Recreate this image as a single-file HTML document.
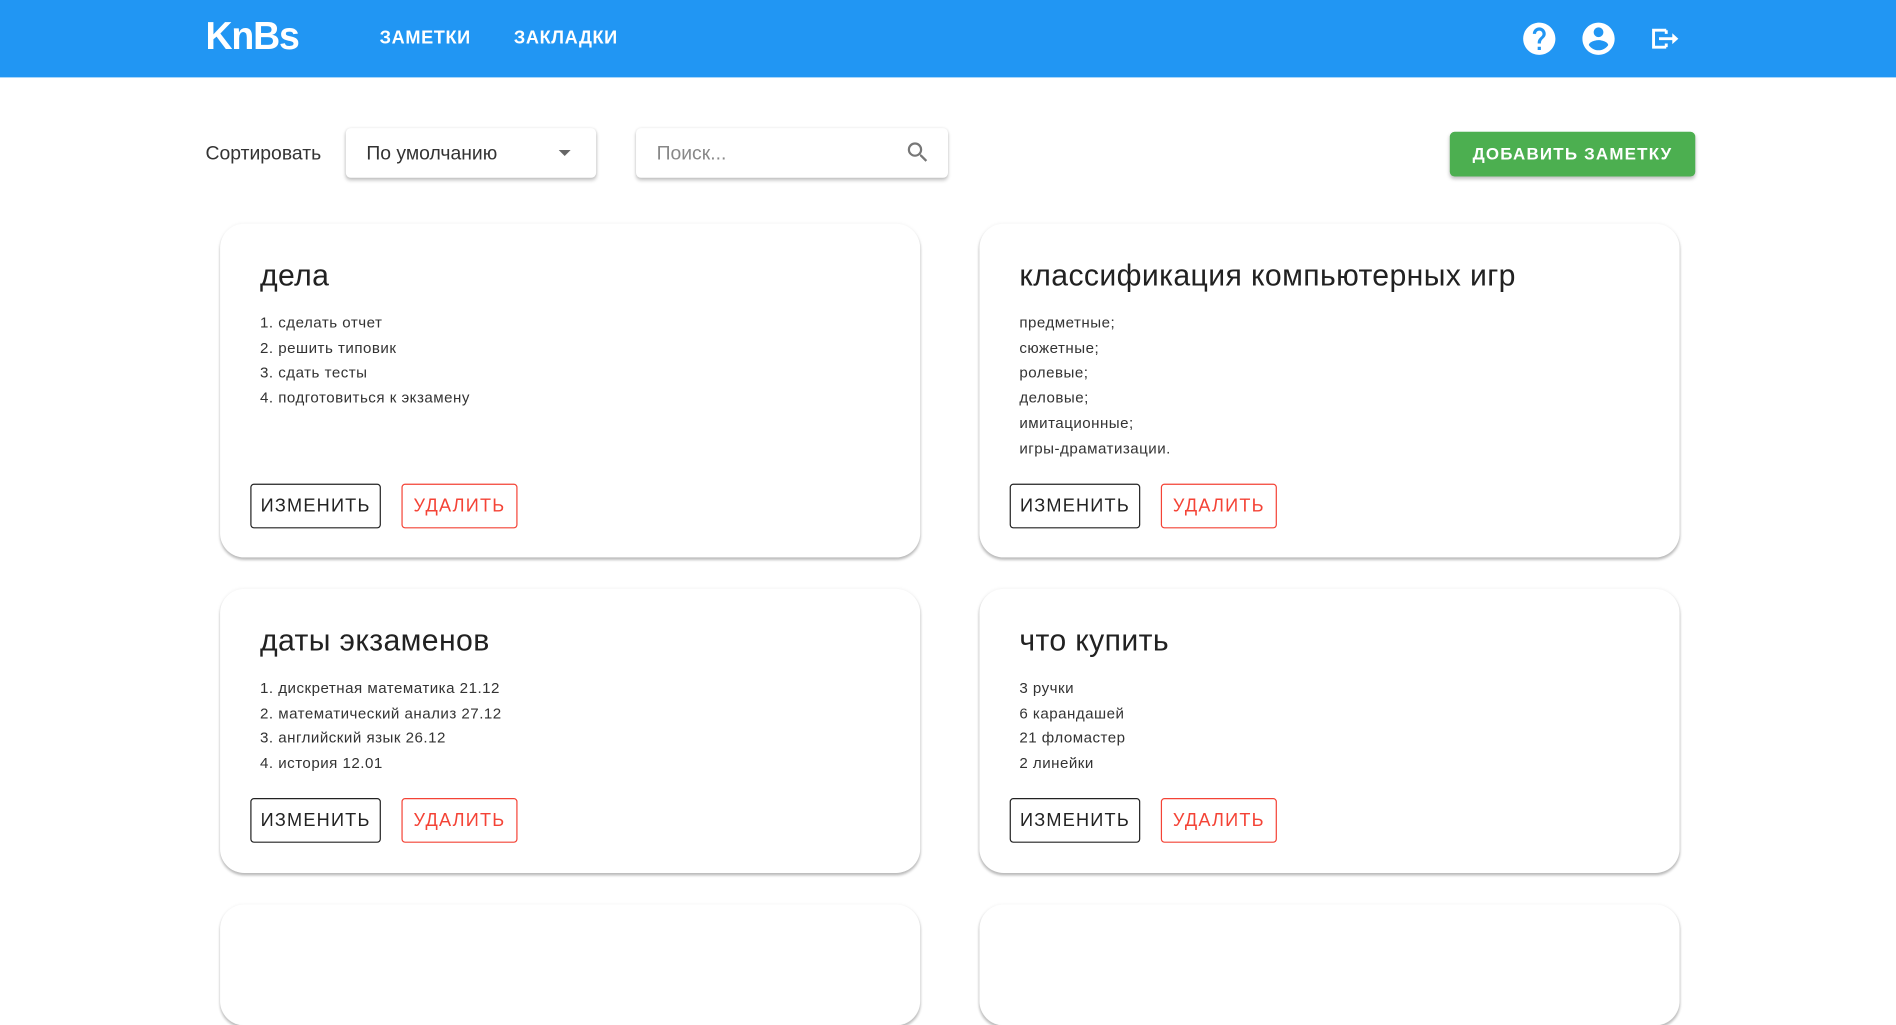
<!DOCTYPE html>
<html><head><meta charset="utf-8"><style>
html,body{margin:0;padding:0;width:1896px;height:933px;overflow:hidden;background:#fff}
#w{position:absolute;left:0;top:0;width:1568px;height:772px;transform:scale(1.20918);transform-origin:0 0;font-family:"Liberation Sans",sans-serif;color:#212121}
.a{position:absolute}
.hdr{left:0;top:0;width:1568px;height:64px;background:#2196F3}
.logo{left:170px;top:12px;font-size:31px;font-weight:bold;color:#fff;letter-spacing:-1px;transform:scaleY(1.05)}
.nav{top:23px;font-size:15px;font-weight:bold;color:#fff;letter-spacing:0.5px}
.box{background:#fff;border-radius:4px;box-shadow:0 2px 3px rgba(0,0,0,.22),0 0 2px rgba(0,0,0,.1)}
.card{background:#fff;border-radius:20px;box-shadow:0 2px 2px rgba(0,0,0,.25),0 0 3px rgba(0,0,0,.06)}
.t{font-size:25px;color:#212121;letter-spacing:0.3px}
.it{font-size:12.5px;color:#333;line-height:20.7px;letter-spacing:0.4px}
.btn{height:35px;border:1px solid #222;border-radius:3px;font-size:15px;letter-spacing:1px;line-height:36px;text-align:center;color:#222}
.del{border-color:#f44336;color:#f44336}
</style></head><body><div id="w">
<div class="a hdr"></div>
<div class="a logo">KnBs</div>
<div class="a nav" style="left:314px">ЗАМЕТКИ</div>
<div class="a nav" style="left:425px">ЗАКЛАДКИ</div>
<svg class="a" style="left:1257px;top:16px" width="32" height="32" viewBox="0 0 24 24"><path fill="#fff" d="M12 2C6.48 2 2 6.48 2 12s4.48 10 10 10 10-4.48 10-10S17.52 2 12 2zm1 17h-2v-2h2v2zm2.07-7.75l-.9.92C13.45 12.9 13 13.5 13 15h-2v-.5c0-1.1.45-2.1 1.17-2.83l1.240-1.26c.37-.36.59-.86.59-1.41 0-1.1-.9-2-2-2s-2 .9-2 2H8c0-2.21 1.790-4 4-4s4 1.79 4 4c0 .88-.36 1.68-.93 2.25z"/></svg>
<svg class="a" style="left:1306px;top:16px" width="32" height="32" viewBox="0 0 24 24"><path fill="#fff" d="M12 2C6.48 2 2 6.48 2 12s4.48 10 10 10 10-4.48 10-10S17.52 2 12 2zm0 3c1.66 0 3 1.34 3 3s-1.34 3-3 3-3-1.34-3-3 1.34-3 3-3zm0 14.2c-2.5 0-4.71-1.28-6-3.22.03-1.99 4-3.08 6-3.08 1.99 0 5.97 1.09 6 3.08-1.29 1.940-3.5 3.22-6 3.22z"/></svg>
<svg class="a" style="left:1364px;top:20px" width="26" height="24" viewBox="0 0 26 24"><path fill="none" stroke="#fff" stroke-width="2.4" d="M14 5H3.5v14H14M14 16v3M14 5v3"/><path fill="none" stroke="#fff" stroke-width="2.4" d="M8 12h12"/><path fill="#fff" d="M19 7.5l5 4.5-5 4.5z"/></svg>

<div class="a" style="left:170px;top:119px;font-size:16px;color:#333">Сортировать</div>
<div class="a box" style="left:286px;top:106px;width:207px;height:41px"></div>
<div class="a" style="left:303px;top:119px;font-size:16px;color:#333">По умолчанию</div>
<svg class="a" style="left:462px;top:124px" width="10" height="6"><path d="M0 0h10L5 5z" fill="#666"/></svg>
<div class="a box" style="left:526px;top:106px;width:258px;height:41px"></div>
<div class="a" style="left:543px;top:119px;font-size:16px;color:#888">Поиск...</div>
<svg class="a" style="left:748px;top:115px" width="22" height="22" viewBox="0 0 24 24"><path fill="#777" d="M15.5 14h-.79l-.28-.27A6.470 6.470 0 0016 9.5 6.5 6.5 0 109.5 16c1.61 0 3.09-.59 4.23-1.57l.27.28v.79l5 4.99L20.49 19l-4.99-5zm-6 0C7.01 14 5 11.99 5 9.5S7.01 5 9.5 5 14 7.01 14 9.5 11.99 14 9.5 14z"/></svg>
<div class="a" style="left:1199px;top:109px;width:203px;height:37px;background:#4CAF50;border-radius:4px;box-shadow:0 2px 3px rgba(0,0,0,.25);color:#fff;font-size:14px;font-weight:bold;letter-spacing:1px;line-height:37px;text-align:center">ДОБАВИТЬ ЗАМЕТКУ</div>

<div class="a card" style="left:182px;top:185px;width:579px;height:276px"></div>
<div class="a t" style="left:215px;top:214px">дела</div>
<div class="a it" style="left:215px;top:257px">1. сделать отчет<br>2. решить типовик<br>3. сдать тесты<br>4. подготовиться к экзамену</div>
<div class="a btn" style="left:207px;top:400px;width:106px">ИЗМЕНИТЬ</div>
<div class="a btn del" style="left:332px;top:400px;width:94px">УДАЛИТЬ</div>

<div class="a card" style="left:810px;top:185px;width:579px;height:276px"></div>
<div class="a t" style="left:843px;top:214px">классификация компьютерных игр</div>
<div class="a it" style="left:843px;top:257px">предметные;<br>сюжетные;<br>ролевые;<br>деловые;<br>имитационные;<br>игры-драматизации.</div>
<div class="a btn" style="left:835px;top:400px;width:106px">ИЗМЕНИТЬ</div>
<div class="a btn del" style="left:960px;top:400px;width:94px">УДАЛИТЬ</div>

<div class="a card" style="left:182px;top:487px;width:579px;height:235px"></div>
<div class="a t" style="left:215px;top:516px">даты экзаменов</div>
<div class="a it" style="left:215px;top:559px">1. дискретная математика 21.12<br>2. математический анализ 27.12<br>3. английский язык 26.12<br>4. история 12.01</div>
<div class="a btn" style="left:207px;top:660px;width:106px">ИЗМЕНИТЬ</div>
<div class="a btn del" style="left:332px;top:660px;width:94px">УДАЛИТЬ</div>

<div class="a card" style="left:810px;top:487px;width:579px;height:235px"></div>
<div class="a t" style="left:843px;top:516px">что купить</div>
<div class="a it" style="left:843px;top:559px">3 ручки<br>6 карандашей<br>21 фломастер<br>2 линейки</div>
<div class="a btn" style="left:835px;top:660px;width:106px">ИЗМЕНИТЬ</div>
<div class="a btn del" style="left:960px;top:660px;width:94px">УДАЛИТЬ</div>

<div class="a card" style="left:182px;top:748px;width:579px;height:100px"></div>
<div class="a card" style="left:810px;top:748px;width:579px;height:100px"></div>
</div></body></html>
